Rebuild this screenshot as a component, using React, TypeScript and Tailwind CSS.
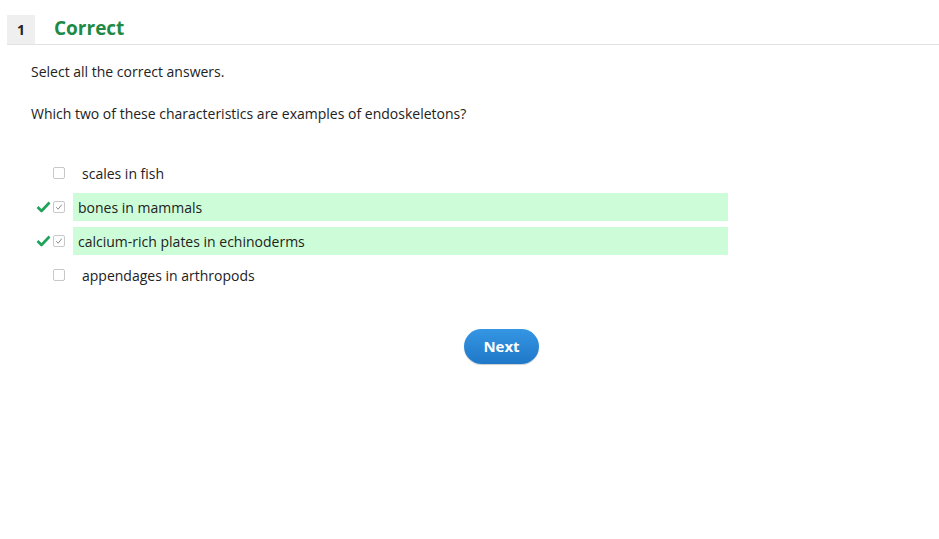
import React from 'react';

interface Choice {
  text: string;
  checked: boolean;
  correct: boolean;
}

const choices: Choice[] = [
  { text: 'scales in fish', checked: false, correct: false },
  { text: 'bones in mammals', checked: true, correct: true },
  { text: 'calcium-rich plates in echinoderms', checked: true, correct: true },
  { text: 'appendages in arthropods', checked: false, correct: false },
];

const Box: React.FC<{ checked: boolean }> = ({ checked }) => (
  <div className="w-[12px] h-[12px] border border-[#c8c8c8] rounded-[2px] bg-white flex items-center justify-center">
    {checked && (
      <svg width="8" height="8" viewBox="0 0 8 8">
        <path d="M1.2 4.2 L3.2 6.2 L6.8 1.6" fill="none" stroke="#8a8a8a" strokeWidth="1" />
      </svg>
    )}
  </div>
);

const App: React.FC = () => {
  return (
    <div className="w-[939px] h-[539px] bg-white text-[#222] text-[14px]" style={{ fontFamily: '"Open Sans", sans-serif' }}>
      <div className="pt-[15px] pl-[7px]">
        <div className="flex items-stretch border-b border-[#e2e2e2]">
          <div className="w-[28px] h-[29px] bg-[#efefef] flex items-center justify-center font-bold text-[14px] text-[#222]">1</div>
          <div className="pl-[19px] flex items-center text-[19px] font-bold text-[#1e8a45] leading-none pb-[3px]">Correct</div>
        </div>
      </div>

      <div className="pl-[31px] pt-[17px]">
        <p className="leading-[20px]">Select all the correct answers.</p>
        <p className="leading-[20px] mt-[22px]">Which two of these characteristics are examples of endoskeletons?</p>
      </div>

      <div className="mt-[35px] flex flex-col gap-[6px]">
        {choices.map(c => (
          <div key={c.text} className="flex items-center h-[28px]">
            <div className="w-[53px] flex justify-end pr-[2px]">
              {c.correct && (
                <svg width="15" height="12" viewBox="0 0 15 12">
                  <path d="M1.5 6 L5.5 10 L13.5 1.5" fill="none" stroke="#1fa35a" strokeWidth="2.6" strokeLinejoin="round" />
                </svg>
              )}
            </div>
            <div className="w-[20px]">
              <Box checked={c.checked} />
            </div>
            <div className={`w-[655px] h-[28px] flex items-center ${c.correct ? 'bg-[#cdfdd8] pl-[5px]' : 'pl-[9px]'}`}>
              {c.text}
            </div>
          </div>
        ))}
      </div>

      <div className="flex justify-center pl-[64px] mt-[40px]">
        <button className="w-[75px] h-[35px] rounded-full bg-gradient-to-b from-[#3596e3] to-[#1f78c8] text-white font-bold text-[15px] shadow-[0_1px_1px_rgba(0,0,0,0.2)]">
          Next
        </button>
      </div>
    </div>
  );
};

export default App;
